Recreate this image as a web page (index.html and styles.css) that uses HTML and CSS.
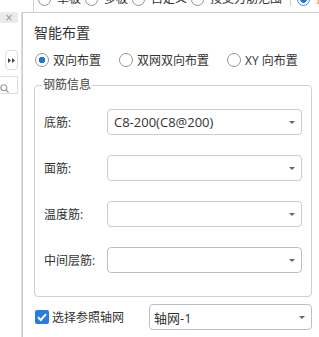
FILE: index.html
```html
<!DOCTYPE html>
<html lang="zh-CN">
<head>
  <meta charset="UTF-8">
  <title>智能布置</title>
  <link rel="stylesheet" href="styles.css">
</head>
<body>
  <div class="topbar">
    <div class="topbar-gap"></div>
    <div class="tabs">
      <span class="tab"><i class="radio small"></i>单板</span>
      <span class="tab"><i class="radio small"></i>多板</span>
      <span class="tab"><i class="radio small"></i>自定义</span>
      <span class="tab"><i class="radio small"></i>按支刃筋范围</span>
      <span class="tab-sep"></span>
      <span class="tab active"><i class="radio small on"></i>按</span>
    </div>
  </div>

  <div class="main">
    <aside class="side">
      <div class="side-head">×</div>
      <div class="side-btn">
        <svg width="7" height="5" viewBox="0 0 7 5"><path d="M0 0 L3 2.5 L0 5 Z M4 0 L7 2.5 L4 5 Z" fill="#444"/></svg>
      </div>
      <div class="side-search">
        <svg width="9" height="9" viewBox="0 0 9 9"><circle cx="3.8" cy="3.8" r="3" fill="none" stroke="#999" stroke-width="1.1"/><path d="M6 6 L8.5 8.5" stroke="#999" stroke-width="1.2"/></svg>
      </div>
    </aside>

    <section class="panel">
      <h3 class="title">智能布置</h3>

      <div class="modes">
        <label class="opt"><i class="radio on"></i>双向布置</label>
        <label class="opt"><i class="radio"></i>双网双向布置</label>
        <label class="opt"><i class="radio"></i>XY 向布置</label>
      </div>

      <fieldset class="rebar">
        <legend>钢筋信息</legend>
        <div class="row">
          <span class="row-label">底筋:</span>
          <div class="select">C8-200(C8@200)<span class="caret"></span></div>
        </div>
        <div class="row">
          <span class="row-label">面筋:</span>
          <div class="select"><span class="caret"></span></div>
        </div>
        <div class="row">
          <span class="row-label">温度筋:</span>
          <div class="select"><span class="caret"></span></div>
        </div>
        <div class="row">
          <span class="row-label">中间层筋:</span>
          <div class="select hover"><span class="caret"></span></div>
        </div>
      </fieldset>

      <div class="axis">
        <span class="check">
          <svg width="14" height="14" viewBox="0 0 14 14"><path d="M3 7.2 L5.8 10 L11 4.2" fill="none" stroke="#fff" stroke-width="2"/></svg>
        </span>
        <span class="axis-label">选择参照轴网</span>
        <div class="select axis-select hover">轴网-1<span class="caret"></span></div>
      </div>
    </section>
  </div>
</body>
</html>
```

FILE: styles.css
```css
body {
  margin: 0;
  height: 337px;
  overflow: hidden;
  background: #fff;
  color: #333;
  font-family: "Open Sans", "Noto Sans CJK SC", sans-serif;
  font-size: 12px;
}

/* top tab strip, cut off by the window */
.topbar {
  display: flex;
  height: 12px;
  overflow: hidden;
}

.topbar-gap {
  width: 33px;
  flex-shrink: 0;
  border-right: 1px solid #d4d4d4;
}

.tabs {
  display: flex;
  align-items: center;
  flex-shrink: 0;
  height: 14px;
  line-height: 14px;
  margin-top: -8px;
  padding-left: 4px;
  white-space: nowrap;
}

.tab {
  display: flex;
  align-items: center;
  margin-right: 4px;
  flex-shrink: 0;
}

.tab.active {
  color: #e07b00;
}

.tab-sep {
  width: 1px;
  height: 14px;
  background: #ccc;
  margin: 0 6px 0 4px;
  flex-shrink: 0;
}

.radio {
  display: inline-block;
  box-sizing: border-box;
  width: 14px;
  height: 14px;
  border: 1px solid #959595;
  border-radius: 50%;
  background: #fff;
  margin-right: 4px;
  flex-shrink: 0;
}

.radio.small {
  width: 13px;
  height: 13px;
  margin-right: 6px;
}

.radio.on {
  background: radial-gradient(circle, #1f74e0 0 3px, #fff 3.5px);
}

.tab .radio.on {
  border-color: #4a8ee0;
}

/* main area */
.main {
  display: flex;
  height: 325px;
}

.side {
  width: 21px;
  border-right: 1px solid #dcdcdc;
  flex-shrink: 0;
}

.side-head {
  width: 18px;
  height: 11px;
  background: #ebebeb;
  color: #999;
  font-family: "DejaVu Sans", sans-serif;
  font-size: 10px;
  line-height: 11px;
  text-align: center;
}

.side-btn {
  box-sizing: border-box;
  width: 13px;
  height: 20px;
  margin: 27px 0 0 5px;
  border: 1px solid #ddd;
  border-radius: 4px;
  display: flex;
  align-items: center;
  justify-content: center;
}

.side-search {
  box-sizing: border-box;
  width: 18px;
  height: 18px;
  margin-top: 6px;
  border: 1px solid #ddd;
  border-left: none;
  padding: 3px 0 0 0;
}

.panel {
  flex: 1;
  min-width: 0;
  border-left: 1px solid #ccc;
  border-top: 1px solid #ccc;
  padding: 10px 7px 0 11px;
}

.title {
  margin: 0;
  font-size: 14px;
  font-weight: normal;
  line-height: 20px;
  color: #333;
}

.modes {
  display: flex;
  align-items: center;
  height: 20px;
  margin-top: 7px;
  white-space: nowrap;
}

.opt {
  display: flex;
  align-items: center;
  margin-right: 17px;
  flex-shrink: 0;
}

.opt .radio {
  margin-left: 1px;
}

.rebar {
  margin: 7px 0 0 0;
  padding: 16px 9px 23px 9px;
  border: 1px solid #cfcfcf;
  border-radius: 4px;
  min-width: 0;
}

.rebar legend {
  font-size: 12px;
  line-height: 16px;
  padding: 0 1px;
  margin-left: -2px;
  color: #444;
}

.row {
  display: flex;
  align-items: center;
  height: 26px;
}

.row + .row {
  margin-top: 20px;
}

.row-label {
  width: 63px;
  flex-shrink: 0;
  white-space: nowrap;
}

.select {
  flex: 1;
  box-sizing: border-box;
  height: 26px;
  border: 1px solid #cdcdcd;
  border-radius: 4px;
  padding: 0 6px 0 6px;
  display: flex;
  align-items: center;
  font-size: 13px;
  color: #333;
  white-space: nowrap;
}

.select.hover {
  border-color: #b8c0cf;
}

.caret {
  margin-left: auto;
  width: 0;
  height: 0;
  border-left: 3px solid transparent;
  border-right: 3px solid transparent;
  border-top: 3px solid #666;
}

.axis {
  display: flex;
  align-items: center;
  height: 26px;
  margin-top: 7px;
  white-space: nowrap;
}

.check {
  width: 14px;
  height: 14px;
  margin: 0 3px 0 1px;
  border-radius: 2px;
  background: #2a7be4;
  display: flex;
  flex-shrink: 0;
}

.axis-select {
  flex: none;
  width: 163px;
  margin-left: auto;
  padding-left: 4px;
}
```
